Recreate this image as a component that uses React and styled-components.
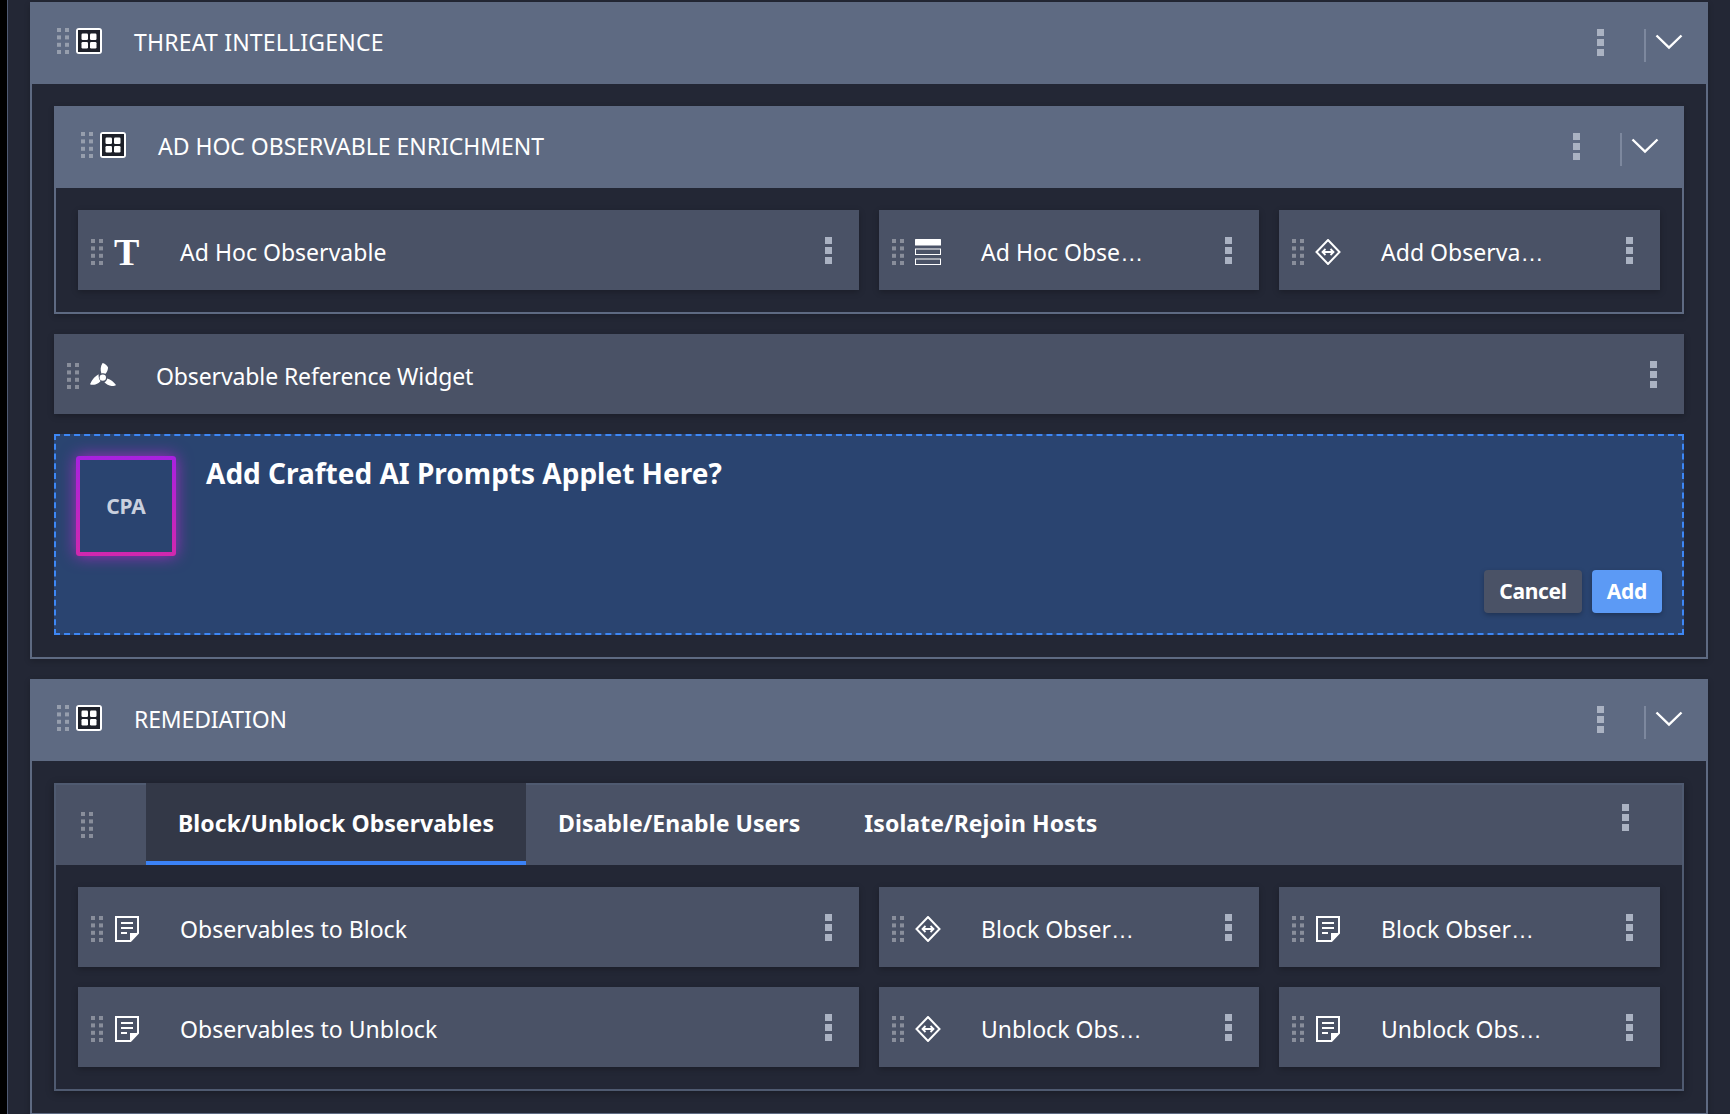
import React from 'react';
import styled, { createGlobalStyle } from 'styled-components';

const GlobalStyle = createGlobalStyle`
  html, body {
    margin: 0;
    height: 1114px;
    overflow: hidden;
    background: #232735;
  }
  * {
    box-sizing: border-box;
  }
`;

// Page shell
const Page = styled.div`
  height: 1114px;
  overflow: hidden;
  background: #232735;
  border-left: 7px solid #000;
  box-shadow: inset 1px 0 0 #4f5a72;
  padding: 2px 22px 0 23px;
  font-family: "Noto Sans", "Liberation Sans", sans-serif;
  color: #fff;
  display: flex;
  flex-direction: column;
  gap: 20px;
`;

const Section = styled.section`
  display: flex;
  flex-direction: column;
  flex: ${(p) => (p.$fill ? 1 : 'none')};
  border: 2px solid #5e6a82;
  border-top: 0;
  box-shadow: 0 2px 6px rgba(0, 0, 0, 0.2);
`;

const SectionHeader = styled.header`
  height: 82px;
  margin: 0 -2px;
  background: #5e6a82;
  display: flex;
  align-items: center;
  padding: 0 25px 4px 27px;
`;

const SectionTitle = styled.span`
  font-size: 23px;
  margin-left: 32px;
  position: relative;
  top: 1px;
  letter-spacing: ${(p) => p.$spacing}px;
`;

const HeaderActions = styled.div`
  margin-left: auto;
  display: flex;
  align-items: center;
`;

const HeaderKebab = styled.span`
  display: flex;
  margin-top: 2px;
`;

const Divider = styled.span`
  width: 2px;
  height: 33px;
  margin: 9px 9px 0 40px;
  background: #7d889e;
`;

const ChevronSlot = styled.span`
  display: flex;
  margin-top: 1px;
`;

const SectionBody = styled.div`
  display: flex;
  flex-direction: column;
  gap: 20px;
  padding: 22px;
`;

const TileGrid = styled.div`
  display: grid;
  grid-template-columns: 781px 380px 381px;
  gap: 20px;
`;

const Tile = styled.div`
  height: 80px;
  background: #4a5266;
  box-shadow: 0 2px 6px rgba(0, 0, 0, 0.25);
  display: flex;
  align-items: center;
  padding: 4px 27px 0 13px;
  position: relative;
`;

const IconSlot = styled.span`
  width: 77px;
  flex: none;
  display: flex;
  align-items: center;
  padding-left: 11px;
`;

const TileLabel = styled.span`
  font-size: 23px;
  letter-spacing: ${(p) => p.$spacing ?? 0.02}px;
  white-space: nowrap;
`;

const Ellipsis = styled.span`
  font-family: "Liberation Sans", sans-serif;
`;

const TileKebab = styled.span`
  position: absolute;
  top: 27px;
  right: 27px;
  display: flex;
`;

const SerifT = styled.span`
  font-family: "Liberation Serif", serif;
  font-weight: 700;
  font-size: 38px;
  line-height: 26px;
  color: #fff;
`;

// Applet prompt
const Prompt = styled.div`
  height: 201px;
  background: #2a4470;
  border: 2px dashed #3d87f5;
  padding: 20px;
  display: flex;
  gap: 30px;
  position: relative;
`;

const AppletBadge = styled.div`
  width: 100px;
  height: 100px;
  flex: none;
  border: 4px solid transparent;
  border-radius: 3px;
  background: linear-gradient(#2a4470, #2a4470) padding-box,
    linear-gradient(180deg, #a821e0, #d128ae) border-box;
  box-shadow: 0 0 16px rgba(190, 40, 210, 0.8);
  display: flex;
  align-items: center;
  justify-content: center;
  font-size: 21px;
  font-weight: 700;
  letter-spacing: -0.2px;
  color: #c9d0de;
`;

const PromptTitle = styled.h3`
  margin: -1px 0 0;
  font-size: 28px;
  line-height: 36px;
  font-weight: 700;
  letter-spacing: 0;
`;

const PromptActions = styled.div`
  position: absolute;
  right: 20px;
  bottom: 20px;
  display: flex;
  gap: 10px;
`;

const Button = styled.button`
  height: 43px;
  padding: 0 15px 2px;
  border: 0;
  border-radius: 4px;
  font-family: inherit;
  font-size: 21px;
  font-weight: 700;
  letter-spacing: -0.3px;
  color: #fff;
  background: ${(p) => (p.$primary ? '#5c9af5' : '#4a5266')};
  box-shadow: 0 2px 5px rgba(0, 0, 0, 0.25);
`;

// Tabs
const TabPanel = styled.div`
  border: 2px solid #4f5a70;
  box-shadow: 0 2px 8px rgba(0, 0, 0, 0.3);
`;

const TabBar = styled.div`
  height: 80px;
  background: #4a5266;
  display: flex;
  align-items: stretch;
  position: relative;
`;

const TabHandle = styled.span`
  width: 90px;
  flex: none;
  padding: 27px 0 0 25px;
`;

const Tab = styled.div`
  display: flex;
  align-items: center;
  padding: ${(p) => (p.$active ? '2px 32px 0' : '0 32px 4px')};
  margin-top: ${(p) => (p.$active ? '-2px' : '0')};
  font-size: 23px;
  font-weight: 700;
  letter-spacing: 0.07px;
  white-space: nowrap;
  background: ${(p) => (p.$active ? '#333847' : 'transparent')};
  border-bottom: ${(p) => (p.$active ? '4px solid #3b82f6' : '0')};
`;

const TabKebab = styled.span`
  position: absolute;
  top: 19px;
  right: 53px;
  display: flex;
`;

const TabContent = styled.div`
  display: flex;
  flex-direction: column;
  gap: 20px;
  padding: 22px;
`;

// Icons
const DragHandle = () => (
  <svg width="12" height="26" viewBox="0 0 12 26" style={{ flex: 'none', display: 'block' }}>
    {[0, 7.4, 14.8, 22].map((y) =>
      [0, 8].map((x) => <rect key={`${x}-${y}`} x={x} y={y} width="4" height="4" fill="#fff" opacity="0.35" />)
    )}
  </svg>
);

const Kebab = () => (
  <svg width="7" height="27" viewBox="0 0 7 27" style={{ display: 'block' }}>
    <rect width="7" height="7" fill="#aab2c2" />
    <rect y="10" width="7" height="7" fill="#aab2c2" />
    <rect y="20" width="7" height="7" fill="#aab2c2" />
  </svg>
);

const Chevron = () => (
  <svg width="28" height="18" viewBox="0 0 28 18" style={{ display: 'block' }}>
    <path d="M1.5 2.5 L14 14.5 L26.5 2.5" fill="none" stroke="#fff" strokeWidth="2.4" />
  </svg>
);

const GridIcon = () => (
  <svg width="26" height="26" viewBox="0 0 26 26" style={{ flex: 'none', display: 'block', marginLeft: 7 }}>
    <rect width="26" height="26" rx="3" fill="#fff" />
    <rect x="2" y="2" width="22" height="22" fill="#1d2029" />
    <rect x="5.5" y="5.5" width="6.5" height="6.5" rx="1.2" fill="#fff" />
    <rect x="14" y="5.5" width="6.5" height="6.5" rx="1.2" fill="#fff" />
    <rect x="5.5" y="14" width="6.5" height="6.5" rx="1.2" fill="#fff" />
    <rect x="14" y="14" width="6.5" height="6.5" rx="1.2" fill="#fff" />
  </svg>
);

const TableIcon = () => (
  <svg width="26" height="26" viewBox="0 0 26 26" style={{ display: 'block' }}>
    <rect width="26" height="6.5" rx="0.5" fill="#fff" />
    <rect x="0.5" y="10" width="25" height="5.5" fill="none" stroke="#fff" />
    <rect x="0.5" y="20" width="25" height="5.5" fill="none" stroke="#fff" />
  </svg>
);

const DiamondIcon = () => (
  <svg width="26" height="26" viewBox="0 0 26 26" style={{ display: 'block' }}>
    <path d="M13 1 L24.5 13 L13 25 L1.5 13 Z" fill="none" stroke="#fff" strokeWidth="2" />
    <path d="M8 13 H18 M10.5 10 L7.5 13 L10.5 16 M15.5 10 L18.5 13 L15.5 16" fill="none" stroke="#fff" strokeWidth="1.8" />
  </svg>
);

const DocIcon = () => (
  <svg width="24" height="26" viewBox="0 0 24 26" style={{ display: 'block', marginLeft: 1 }}>
    <path d="M1 1 H23 V17 L15.5 25 H1 Z" fill="none" stroke="#fff" strokeWidth="2" />
    <path d="M15 25 V17 H23 Z" fill="#fff" />
    <path d="M6 7 H18 M6 12 H18 M6 17 H12" fill="none" stroke="#fff" strokeWidth="2" />
  </svg>
);

const FanIcon = () => (
  <svg width="26" height="26" viewBox="0 0 26 26" style={{ display: 'block' }}>
    <circle cx="12.8" cy="14.6" r="3.2" fill="#fff" />
    <path d="M12.6 0 C10.4 3 10.2 7.6 11.4 10.4 C12.8 10 14.4 10 15.6 10.8 C17.2 8.6 18.2 6 18 4.2 C16.8 2 14.6 0.4 12.6 0 Z" fill="#fff" />
    <path d="M8.6 11.2 C6 12.6 2 16 0 21.2 C1 21.8 3.4 22 5.4 21.4 C7.8 20.6 9.6 19.6 10.6 18 C9 16.6 8.4 14 8.6 11.2 Z" fill="#fff" />
    <path d="M17.2 15.4 C17 17 15.8 18.6 14.4 19.2 C16 21 19 22.8 21.6 23 C23.4 23.2 25 22.8 26 22 C24 19 20.8 16.2 17.2 15.4 Z" fill="#fff" />
  </svg>
);

const icons = {
  text: <SerifT>T</SerifT>,
  table: <TableIcon />,
  diamond: <DiamondIcon />,
  doc: <DocIcon />,
  fan: <FanIcon />,
};

const TileItem = ({ icon, label, spacing }) => {
  const truncated = label.endsWith('…');
  return (
    <Tile>
      <DragHandle />
      <IconSlot>{icons[icon]}</IconSlot>
      <TileLabel $spacing={spacing}>
        {truncated ? label.slice(0, -1) : label}
        {truncated && <Ellipsis>…</Ellipsis>}
      </TileLabel>
      <TileKebab>
        <Kebab />
      </TileKebab>
    </Tile>
  );
};

const Header = ({ title, spacing }) => (
  <SectionHeader>
    <DragHandle />
    <GridIcon />
    <SectionTitle $spacing={spacing}>{title}</SectionTitle>
    <HeaderActions>
      <HeaderKebab>
        <Kebab />
      </HeaderKebab>
      <Divider />
      <ChevronSlot>
        <Chevron />
      </ChevronSlot>
    </HeaderActions>
  </SectionHeader>
);

const enrichmentTiles = [
  { icon: 'text', label: 'Ad Hoc Observable' },
  { icon: 'table', label: 'Ad Hoc Obse…' },
  { icon: 'diamond', label: 'Add Observa…' },
];

const remediationRows = [
  [
    { icon: 'doc', label: 'Observables to Block' },
    { icon: 'diamond', label: 'Block Obser…' },
    { icon: 'doc', label: 'Block Obser…' },
  ],
  [
    { icon: 'doc', label: 'Observables to Unblock' },
    { icon: 'diamond', label: 'Unblock Obs…' },
    { icon: 'doc', label: 'Unblock Obs…' },
  ],
];

const tabs = ['Block/Unblock Observables', 'Disable/Enable Users', 'Isolate/Rejoin Hosts'];

const App = () => (
  <>
    <GlobalStyle />
    <Page>
      <Section>
        <Header title="THREAT INTELLIGENCE" spacing={0.2} />
        <SectionBody>
          <Section>
            <Header title="AD HOC OBSERVABLE ENRICHMENT" spacing={-0.03} />
            <SectionBody>
              <TileGrid>
                {enrichmentTiles.map((tile, index) => (
                  <TileItem key={index} {...tile} />
                ))}
              </TileGrid>
            </SectionBody>
          </Section>
          <TileItem icon="fan" label="Observable Reference Widget" spacing={-0.12} />
          <Prompt>
            <AppletBadge>CPA</AppletBadge>
            <PromptTitle>Add Crafted AI Prompts Applet Here?</PromptTitle>
            <PromptActions>
              <Button>Cancel</Button>
              <Button $primary>Add</Button>
            </PromptActions>
          </Prompt>
        </SectionBody>
      </Section>
      <Section $fill>
        <Header title="REMEDIATION" spacing={-0.15} />
        <SectionBody>
          <TabPanel>
            <TabBar>
              <TabHandle>
                <DragHandle />
              </TabHandle>
              {tabs.map((tab, index) => (
                <Tab key={tab} $active={index === 0}>
                  {tab}
                </Tab>
              ))}
              <TabKebab>
                <Kebab />
              </TabKebab>
            </TabBar>
            <TabContent>
              {remediationRows.map((row, rowIndex) => (
                <TileGrid key={rowIndex}>
                  {row.map((tile, index) => (
                    <TileItem key={index} {...tile} />
                  ))}
                </TileGrid>
              ))}
            </TabContent>
          </TabPanel>
        </SectionBody>
      </Section>
    </Page>
  </>
);

export default App;
